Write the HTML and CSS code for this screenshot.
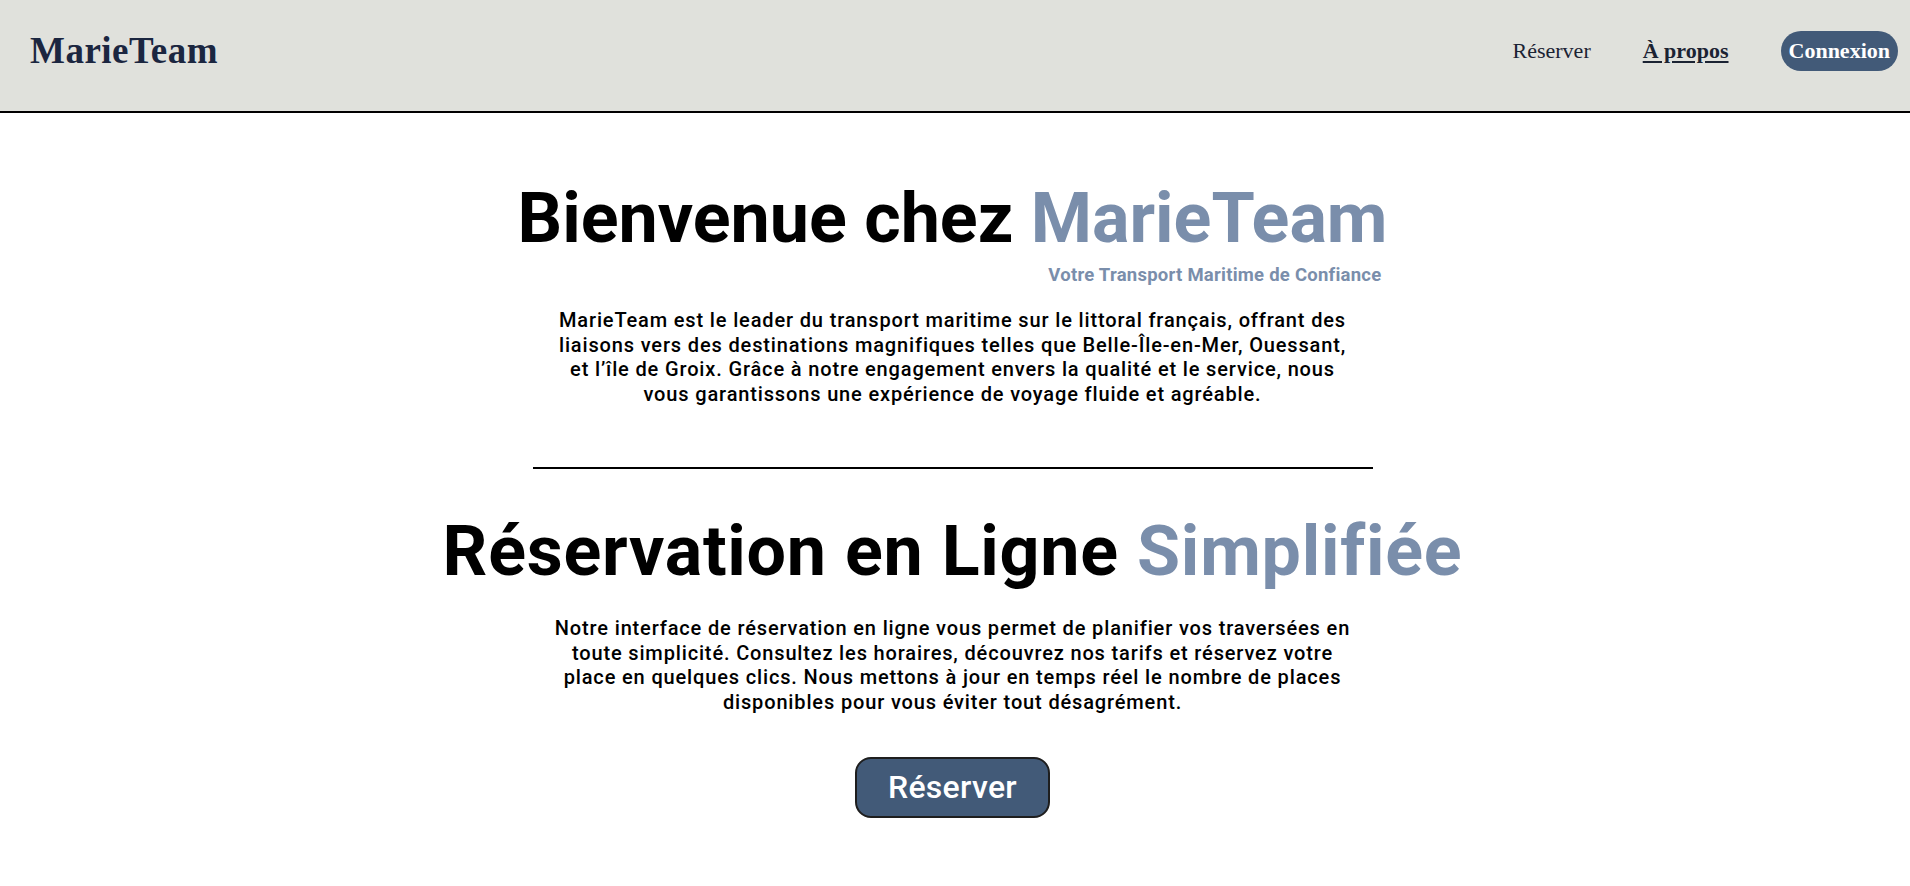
FILE: index.html
```html
<!DOCTYPE html>
<html lang="fr">
<head>
<meta charset="utf-8">
<title>MarieTeam</title>
<link rel="stylesheet" href="styles.css">
</head>
<body>
<header class="site-header">
  <a class="logo" href="#">MarieTeam</a>
  <nav class="nav">
    <a class="nav-link" href="#">Réserver</a>
    <a class="nav-link nav-link--active" href="#">À propos</a>
    <a class="nav-login" href="#">Connexion</a>
  </nav>
</header>
<main class="content">
  <section class="intro">
    <div class="title-block">
      <h1 class="title">Bienvenue chez <span class="accent">MarieTeam</span></h1>
      <p class="tagline">Votre Transport Maritime de Confiance</p>
    </div>
    <p class="lead">MarieTeam est le leader du transport maritime sur le littoral français, offrant des liaisons vers des destinations magnifiques telles que Belle-Île-en-Mer, Ouessant, et l’île de Groix. Grâce à notre engagement envers la qualité et le service, nous vous garantissons une expérience de voyage fluide et agréable.</p>
  </section>
  <hr class="divider">
  <section class="booking">
    <h2 class="title title--wide">Réservation en Ligne <span class="accent">Simplifiée</span></h2>
    <p class="lead lead--booking">Notre interface de réservation en ligne vous permet de planifier vos traversées en toute simplicité. Consultez les horaires, découvrez nos tarifs et réservez votre place en quelques clics. Nous mettons à jour en temps réel le nombre de places disponibles pour vous éviter tout désagrément.</p>
    <a class="btn-reserve" href="#">Réserver</a>
  </section>
</main>
</body>
</html>
```
FILE: styles.css
```css
* { box-sizing: border-box; }

html, body {
  margin: 0;
  padding: 0;
  background: #ffffff;
}

body {
  font-family: Roboto, "Liberation Sans", sans-serif;
  color: #000;
}

a { text-decoration: none; }

.site-header {
  display: flex;
  align-items: center;
  justify-content: space-between;
  height: 113px;
  padding: 0 12px 10px 30px;
  background: #e0e1dc;
  border-bottom: 2px solid #000;
  font-family: "Liberation Serif", "DejaVu Serif", serif;
}

.logo {
  font-size: 37px;
  line-height: 37px;
  font-weight: 700;
  letter-spacing: 0.5px;
  color: #1b2640;
}

.nav {
  display: flex;
  align-items: center;
  gap: 52px;
}

.nav-link {
  font-size: 22px;
  line-height: 22px;
  color: #1b2333;
}

.nav-link--active {
  font-weight: 700;
  text-decoration: underline;
  text-underline-offset: 3px;
}

.nav-login {
  font-size: 22px;
  line-height: 22px;
  font-weight: 700;
  color: #fff;
  background: #425a78;
  padding: 9px 8px;
  border-radius: 20px;
}

.content {
  display: flex;
  flex-direction: column;
  align-items: center;
  padding: 70px 5px 40px 0;
}

.intro,
.booking {
  display: flex;
  flex-direction: column;
  align-items: center;
}

.title-block {
  display: flex;
  flex-direction: column;
  align-items: flex-end;
}

.title {
  margin: 0;
  font-size: 70px;
  line-height: 71px;
  font-weight: 700;
  letter-spacing: 0;
  white-space: nowrap;
}

.title--wide { letter-spacing: 0.75px; }

.accent { color: #7a8eab; }

.tagline {
  margin: 10px 6px 0 0;
  font-size: 18.5px;
  line-height: 23px;
  font-weight: 700;
  letter-spacing: 0.25px;
  color: #7a8eab;
}

.lead {
  width: 802px;
  margin: 21px 0 0;
  font-size: 20px;
  line-height: 24.7px;
  letter-spacing: 0.85px;
  font-weight: 500;
  text-align: center;
}

.lead--booking { margin-top: 29px; }

.divider {
  width: 840px;
  height: 2px;
  margin: 60px 0 47px;
  border: 0;
  background: #000;
}

.btn-reserve {
  margin-top: 42px;
  display: inline-flex;
  align-items: center;
  justify-content: center;
  width: 195px;
  height: 61px;
  font-size: 32px;
  font-weight: 500;
  letter-spacing: 0.3px;
  color: #fff;
  background: #425a78;
  border: 2px solid #1e1e1e;
  border-radius: 16px;
}
```
